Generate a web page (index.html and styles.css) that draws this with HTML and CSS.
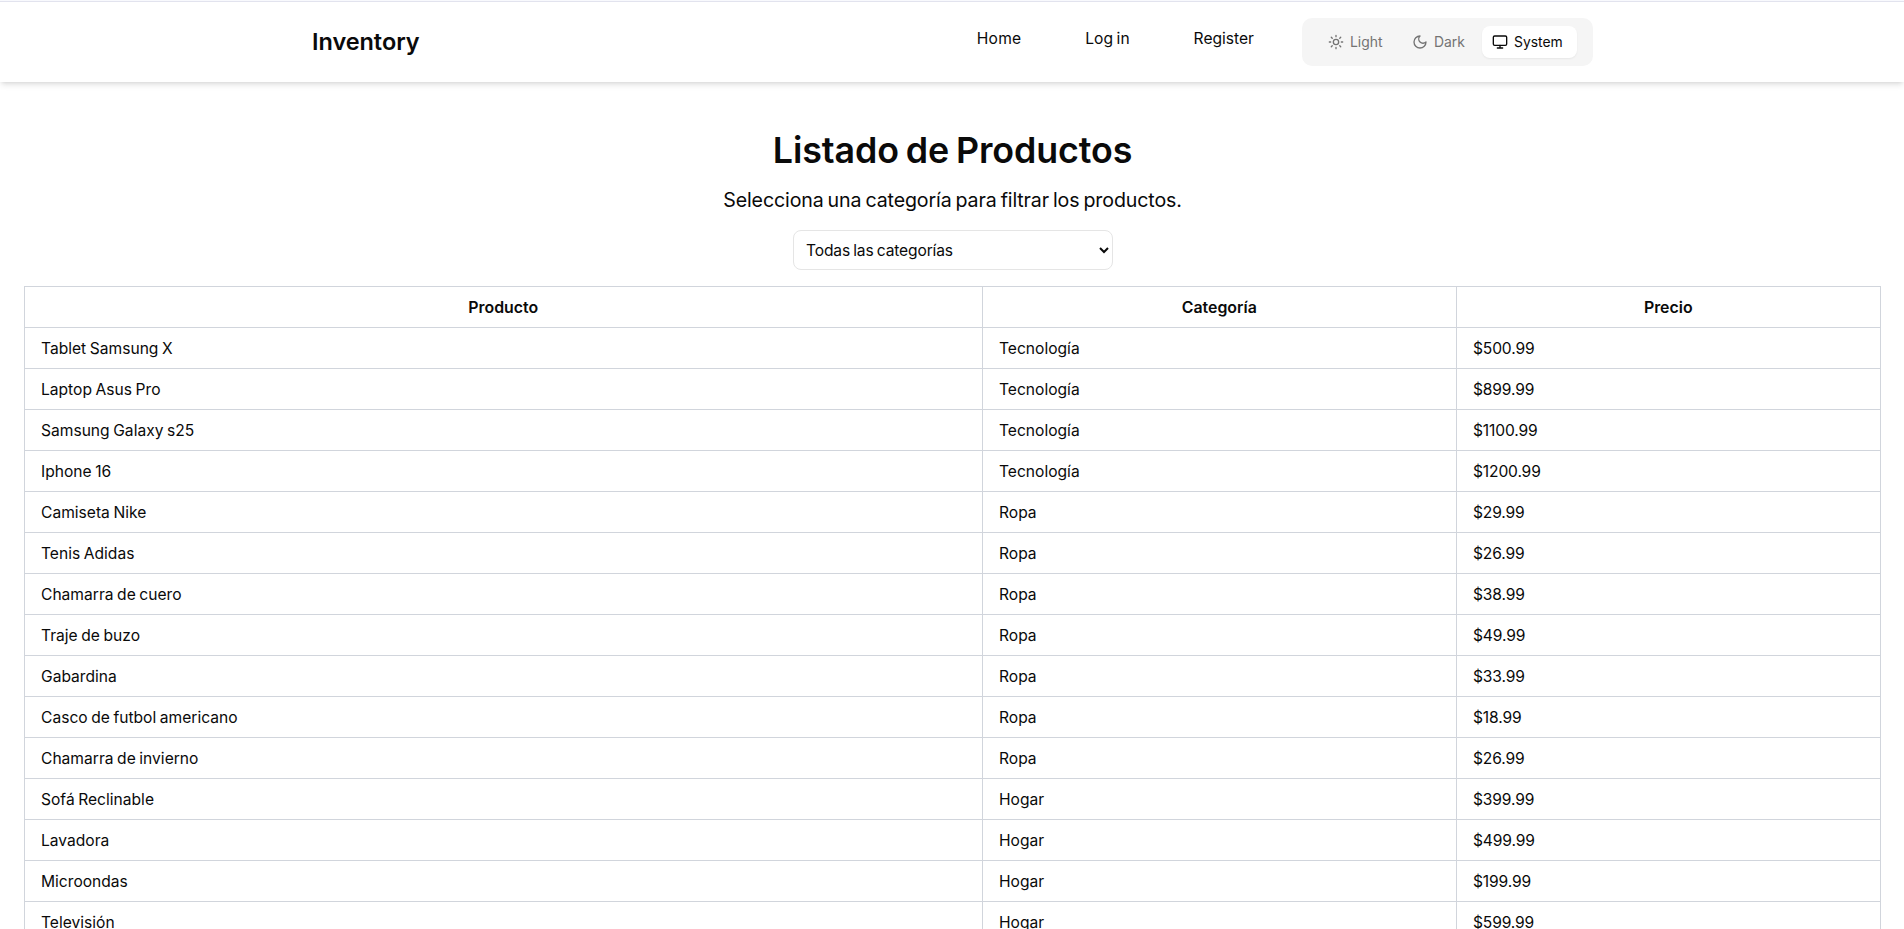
FILE: index.html
```html
<!DOCTYPE html>
<html lang="es">
<head>
<meta charset="utf-8">
<title>Inventory</title>
<link rel="stylesheet" href="styles.css">
</head>
<body>
<header class="header">
  <div class="header-inner">
    <span class="brand">Inventory</span>
    <div class="header-end">
      <nav class="nav">
        <a class="nav-home">Home</a>
        <a class="nav-login">Log in</a>
        <a class="nav-register">Register</a>
      </nav>
      <div class="theme">
        <button class="theme-btn theme-light"><svg class="icon" viewBox="0 0 24 24"><circle cx="12" cy="12" r="4"/><path d="M12 2v2M12 20v2M4.93 4.93l1.41 1.41M17.66 17.66l1.41 1.41M2 12h2M20 12h2M6.34 17.66l-1.41 1.41M19.07 4.93l-1.41 1.41"/></svg><span>Light</span></button>
        <button class="theme-btn theme-dark"><svg class="icon" viewBox="0 0 24 24"><path d="M12 3a6 6 0 0 0 9 9 9 9 0 1 1-9-9Z"/></svg><span>Dark</span></button>
        <button class="theme-btn theme-system active"><svg class="icon" viewBox="0 0 24 24"><rect width="20" height="14" x="2" y="3" rx="2"/><path d="M8 21h8M12 17v4"/></svg><span>System</span></button>
      </div>
    </div>
  </div>
</header>
<main class="main">
  <h1 class="title">Listado de Productos</h1>
  <p class="subtitle">Selecciona una categoría para filtrar los productos.</p>
  <select class="filter"><option>Todas las categorías</option></select>
  <table class="products">
    <colgroup><col class="col-product"><col class="col-category"><col class="col-price"></colgroup>
    <thead><tr><th>Producto</th><th>Categoría</th><th>Precio</th></tr></thead>
    <tbody>
      <tr><td>Tablet Samsung X</td><td>Tecnología</td><td>$500.99</td></tr>
      <tr><td>Laptop Asus Pro</td><td>Tecnología</td><td>$899.99</td></tr>
      <tr><td>Samsung Galaxy s25</td><td>Tecnología</td><td>$1100.99</td></tr>
      <tr><td>Iphone 16</td><td>Tecnología</td><td>$1200.99</td></tr>
      <tr><td>Camiseta Nike</td><td>Ropa</td><td>$29.99</td></tr>
      <tr><td>Tenis Adidas</td><td>Ropa</td><td>$26.99</td></tr>
      <tr><td>Chamarra de cuero</td><td>Ropa</td><td>$38.99</td></tr>
      <tr><td>Traje de buzo</td><td>Ropa</td><td>$49.99</td></tr>
      <tr><td>Gabardina</td><td>Ropa</td><td>$33.99</td></tr>
      <tr><td>Casco de futbol americano</td><td>Ropa</td><td>$18.99</td></tr>
      <tr><td>Chamarra de invierno</td><td>Ropa</td><td>$26.99</td></tr>
      <tr><td>Sofá Reclinable</td><td>Hogar</td><td>$399.99</td></tr>
      <tr><td>Lavadora</td><td>Hogar</td><td>$499.99</td></tr>
      <tr><td>Microondas</td><td>Hogar</td><td>$199.99</td></tr>
      <tr><td>Televisión</td><td>Hogar</td><td>$599.99</td></tr>
    </tbody>
  </table>
</main>
</body>
</html>
```
FILE: styles.css
```css
* { box-sizing: border-box; margin: 0; }
html { height: 100%; overflow: hidden; }
body {
  height: 100%;
  overflow: hidden;
  border-top: 1px solid #f8f9fd;
  background: #fff;
  color: #0a0a0a;
  font: 15.6px/24px Inter, "Liberation Sans", sans-serif;
  word-spacing: -0.8px;
}
.header {
  border-top: 1px solid #e2e3ee;
  box-shadow: 0 4px 6px -1px rgb(0 0 0 / 0.1), 0 2px 4px -2px rgb(0 0 0 / 0.1);
}
.header-inner {
  display: flex;
  align-items: center;
  justify-content: space-between;
  width: 1280px;
  height: 80px;
  margin: 0 auto;
}
.brand { font-size: 23.5px; line-height: 32px; font-weight: 600; letter-spacing: -0.05px; }
.header-end { display: flex; align-items: center; margin-right: -1px; }
.nav { display: flex; gap: 64px; margin: 0 48px 6px 0; }
.nav-home { letter-spacing: 0.2px; }
.theme {
  display: flex;
  gap: 4px;
  width: 291px;
  height: 48px;
  padding: 8px 16px;
  border-radius: 10px;
  background: #f5f5f5;
}
.theme-btn {
  display: flex;
  align-items: center;
  height: 32px;
  gap: 6px;
  padding: 0 0 0 10px;
  border: 0;
  border-radius: 8px;
  background: transparent;
  color: #737373;
  font: 13.9px/20px Inter, "Liberation Sans", sans-serif;
  white-space: nowrap;
}
.theme-light { width: 80px; }
.theme-dark { width: 76px; }
.theme-system { width: 95px; }
.theme-btn.active { background: #fff; color: #0a0a0a; box-shadow: 0 1px 2px rgb(0 0 0 / 0.06); }
.icon {
  width: 16px;
  height: 16px;
  fill: none;
  stroke: currentColor;
  stroke-width: 2;
  stroke-linecap: round;
  stroke-linejoin: round;
}
.main { display: flex; flex-direction: column; align-items: center; padding: 48px 24px 0; }
.title { margin-left: 1px; font-size: 35.8px; line-height: 40px; font-weight: 600; letter-spacing: -0.1px; word-spacing: -2px; }
.subtitle { margin: 16px 0 0 1px; font-size: 19.6px; line-height: 28px; letter-spacing: -0.12px; word-spacing: -1.4px; }
.filter {
  width: 320px;
  height: 40px;
  margin: 16px 0 16px 2px;
  padding: 8px;
  border: 1px solid #e5e5e5;
  border-radius: 8px;
  background: #fff;
  color: #0a0a0a;
  font: inherit;
  letter-spacing: -0.15px;
  word-spacing: -1px;
}
.products { width: 1857px; table-layout: fixed; border-collapse: collapse; }
.col-product { width: 958px; }
.col-category { width: 474px; }
.products th, .products td { height: 41px; padding: 9px 16px 7px 16.5px; border: 1px solid #d1d5dc; text-align: left; }
.products td:last-child { letter-spacing: -0.15px; }
.products th { font-size: 15.9px; font-weight: 600; text-align: center; }
```
